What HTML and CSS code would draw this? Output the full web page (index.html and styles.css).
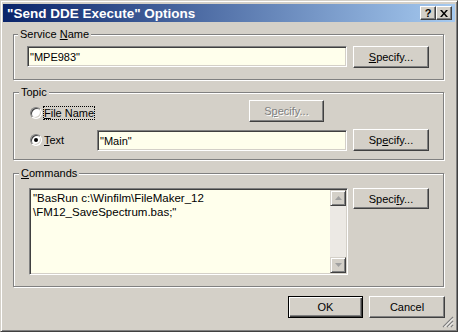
FILE: index.html
```html
<!DOCTYPE html>
<html>
<head>
  <title>"Send DDE Execute" Options</title>
  <link rel="stylesheet" href="styles.css">
</head>
<body>
  <div class="window">
    <div class="titlebar">
      <span class="title">"Send DDE Execute" Options</span>
      <div class="tbtn help">?</div>
      <div class="tbtn close">
        <svg width="8" height="7" viewBox="0 0 8 7">
          <path d="M0 0h2l2 2.5L6 0h2L5 3.5 8 7H6L4 4.5 2 7H0l3-3.5z" fill="#000"/>
        </svg>
      </div>
    </div>

    <div class="body">
      <fieldset class="group">
        <legend>Service <u>N</u>ame</legend>
        <div class="group-inner service">
          <div class="row">
            <div class="field wide">"MPE983"</div>
            <div class="btn"><u>S</u>pecify...</div>
          </div>
        </div>
      </fieldset>

      <fieldset class="group topic">
        <legend>Topic</legend>
        <div class="group-inner topic-inner">
          <div class="row">
            <div class="radio-item first">
              <span class="radio"></span>
              <span class="radio-label focus"><u>F</u>ile Name</span>
            </div>
            <div class="btn disabled">S<u>p</u>ecify...</div>
          </div>
          <div class="row second">
            <div class="radio-item short">
              <span class="radio checked"></span>
              <span class="radio-label"><u>T</u>ext</span>
            </div>
            <div class="field main">"Main"</div>
            <div class="btn">Sp<u>e</u>cify...</div>
          </div>
        </div>
      </fieldset>

      <fieldset class="group commands">
        <legend><u>C</u>ommands</legend>
        <div class="group-inner commands-inner">
          <div class="row">
            <div class="memo">
              <div class="memo-text">"BasRun c:\Winfilm\FileMaker_12<br>\FM12_SaveSpectrum.bas;"</div>
              <div class="scroll">
                <div class="arrow">
                  <svg width="7" height="4" viewBox="0 0 7 4"><path d="M3.5 0L7 4H0z" fill="#a0a0a0"/></svg>
                </div>
                <div class="track"></div>
                <div class="arrow">
                  <svg width="7" height="4" viewBox="0 0 7 4"><path d="M0 0h7L3.5 4z" fill="#a0a0a0"/></svg>
                </div>
              </div>
            </div>
            <div class="btn short">Speci<u>f</u>y...</div>
          </div>
        </div>
      </fieldset>

      <div class="footer">
        <div class="btn default">OK</div>
        <div class="btn">Cancel</div>
      </div>
    </div>

    <svg class="grip" width="12" height="12" viewBox="0 0 12 12">
      <path d="M11 1L1 11M11 5L5 11M11 9L9 11" stroke="#808080" stroke-width="1.2"/>
      <path d="M11 2.5L2.5 11M11 6.5L6.5 11M11 10.5L10.5 11" stroke="#fff" stroke-width="1"/>
    </svg>
  </div>
</body>
</html>
```

FILE: styles.css
```css
body {
  margin: 0;
  font-family: "Liberation Sans", Arial, sans-serif;
  font-size: 11px;
  color: #000;
  background: #d4d0c8;
}

.window {
  position: relative;
  width: 458px;
  height: 332px;
  box-sizing: border-box;
  background: #d4d0c8;
  border: 1px solid;
  border-color: #d4d0c8 #404040 #404040 #d4d0c8;
  box-shadow: inset 1px 1px #fff, inset -1px -1px #808080;
  padding: 3px 2px 2px 2px;
}

.titlebar {
  height: 18px;
  display: flex;
  align-items: center;
  padding: 0 3px 0 4px;
  background: linear-gradient(to right, #0a246a, #a6caf0);
}
.title {
  flex: 1;
  color: #fff;
  font-weight: bold;
  font-size: 13.5px;
  white-space: nowrap;
}
.tbtn {
  width: 16px;
  height: 14px;
  box-sizing: border-box;
  display: flex;
  align-items: center;
  justify-content: center;
  background: #d4d0c8;
  border: 1px solid;
  border-color: #fff #404040 #404040 #fff;
  box-shadow: inset -1px -1px #808080;
  font-weight: bold;
  font-size: 11px;
  line-height: 1;
}

.body {
  padding: 6px 11px 0 10px;
}

.group {
  margin: 0;
  padding: 0;
  min-width: 0;
  border: 1px solid #808080;
  box-shadow: inset 1px 1px #fff, 1px 1px #fff;
}
.group legend {
  margin-left: 4px;
  padding: 0 2px;
  line-height: 13px;
  background: #d4d0c8;
}
.topic legend,
.commands legend {
  margin-left: 5px;
}
.topic {
  margin-top: 6px;
}
.commands {
  margin-top: 7px;
}

.group-inner {
  padding: 5px 0 11px 13px;
}
.topic-inner {
  padding: 1px 0 8px 16px;
}
.commands-inner {
  padding: 8px 0 11px 13px;
}

.row {
  display: flex;
  align-items: flex-start;
}
.row.second {
  margin-top: 7px;
}

.field {
  height: 21px;
  box-sizing: border-box;
  display: flex;
  align-items: center;
  padding: 0 2px;
  background: #ffffec;
  border: 1px solid;
  border-color: #808080 #fff #fff #808080;
  box-shadow: inset 1px 1px #404040, inset -1px -1px #d4d0c8;
  white-space: nowrap;
}
.field.wide {
  width: 320px;
  margin-right: 6px;
}
.field.main {
  width: 250px;
  margin-top: 1px;
  margin-right: 6px;
}

.btn {
  width: 76px;
  height: 22px;
  box-sizing: border-box;
  display: flex;
  align-items: center;
  justify-content: center;
  background: #d4d0c8;
  border: 1px solid;
  border-color: #fff #404040 #404040 #fff;
  box-shadow: inset -1px -1px #808080;
}
.btn.short {
  height: 21px;
}
.btn.disabled {
  width: 75px;
  color: #808080;
  text-shadow: 1px 1px #fff;
}
.btn.default {
  width: 75px;
  border-color: #000;
  box-shadow: inset 1px 1px #fff, inset -1px -1px #404040, inset -2px -2px #808080;
}

.radio-item {
  display: flex;
  align-items: center;
  height: 22px;
}
.radio-item.first {
  width: 219px;
  padding-top: 3px;
  box-sizing: border-box;
}
.radio-item.short {
  width: 67px;
  height: 22px;
}
.radio {
  position: relative;
  width: 12px;
  height: 12px;
  box-sizing: border-box;
  margin-right: 1px;
  border-radius: 50%;
  background: #fff;
  border: 1px solid;
  border-color: #808080 #fff #fff #808080;
  box-shadow: inset 1px 1px #404040, inset -1px -1px #d4d0c8;
}
.radio.checked::after {
  content: "";
  position: absolute;
  left: 3px;
  top: 3px;
  width: 4px;
  height: 4px;
  border-radius: 50%;
  background: #000;
}
.radio-label {
  line-height: 12px;
  border: 1px dotted transparent;
  white-space: nowrap;
}
.radio-label.focus {
  border-color: #000;
}

.memo {
  width: 319px;
  height: 87px;
  box-sizing: border-box;
  margin-left: 2px;
  margin-right: 5px;
  display: flex;
  background: #ffffec;
  border: 1px solid;
  border-color: #808080 #fff #fff #808080;
  box-shadow: inset 1px 1px #404040, inset -1px -1px #d4d0c8;
  padding: 1px;
}
.memo-text {
  flex: 1;
  padding: 1px 2px;
  font-size: 11.5px;
  line-height: 14px;
  white-space: nowrap;
}
.scroll {
  width: 16px;
  display: flex;
  flex-direction: column;
  background: #ece9e4;
}
.scroll .arrow {
  height: 16px;
  box-sizing: border-box;
  display: flex;
  align-items: center;
  justify-content: center;
  background: #d4d0c8;
  border: 1px solid;
  border-color: #d4d0c8 #404040 #404040 #d4d0c8;
  box-shadow: inset 1px 1px #fff, inset -1px -1px #808080;
}
.scroll .track {
  flex: 1;
}

.footer {
  display: flex;
  justify-content: flex-end;
  gap: 6px;
  margin-top: 9px;
  margin-right: -1px;
}

.grip {
  position: absolute;
  right: 3px;
  bottom: 3px;
}
```
